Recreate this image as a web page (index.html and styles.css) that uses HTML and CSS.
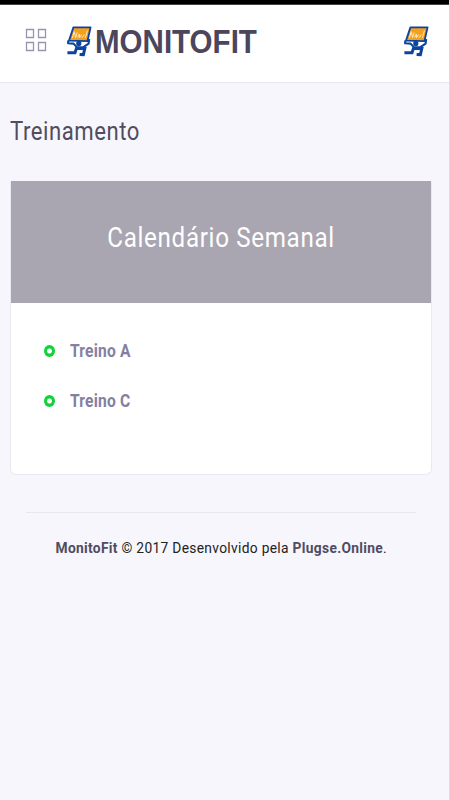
FILE: index.html
```html
<!DOCTYPE html>
<html lang="pt-BR">
<head>
    <meta charset="UTF-8">
    <meta name="viewport" content="width=device-width, initial-scale=1.0">
    <title>MonitoFit - Treinamento</title>
    <link rel="stylesheet" href="styles.css">
</head>
<body>
    <svg width="0" height="0" class="sprite">
        <symbol id="mascot" viewBox="0 0 26 32">
            <path d="M7.4 2.4 L24.6 2.4 L21.4 16.2 L3 15.6 Z" fill="#f5a01d" stroke="#0c459f" stroke-width="1.8" stroke-linejoin="round"/>
            <path d="M6.4 13 L8.2 6.6 L9.6 12.6 L11.2 7.4 M11.6 12.4 L13.4 9 L13.4 12.8 L15.8 9.4 M16 12.8 L18.4 9.6 M21.4 5.6 L19.4 13" fill="none" stroke="#ffe8bd" stroke-width="1"/>
            <circle cx="12.8" cy="18.4" r="2.6" fill="#0c459f"/>
            <path d="M2.4 15.4 L2 18.2 L7.6 18.6 L11 22.4 L17.4 22.2 L22.6 18.6 L23.2 14" fill="none" stroke="#0c459f" stroke-width="2.1" stroke-linejoin="round"/>
            <path d="M10.8 22.4 L9 27.8 L1.4 27.8 M11.4 23.6 L18.8 23.6 L17.4 29.6 L13.6 29.4" fill="none" stroke="#0c459f" stroke-width="3"/>
        </symbol>
    </svg>
    <div class="statusbar"></div>
    <header class="header">
        <svg class="menu" width="22" height="24" viewBox="0 0 22 24">
            <path d="M1.5 1.5h7v8h-7zM13.5 1.5h7v8h-7zM1.5 14.5h7v8h-7zM13.5 14.5h7v8h-7z" fill="none" stroke="#9a94ac" stroke-width="1.3"/>
        </svg>
        <a class="brand">
            <svg class="logo" width="26" height="32"><use href="#mascot"/></svg>
            <span class="brand-name">MONITOFIT</span>
        </a>
        <svg class="logo" width="26" height="32"><use href="#mascot"/></svg>
    </header>
    <main class="content">
        <h1 class="page-title"><span>Treinamento</span></h1>
        <section class="card">
            <div class="card-header">
                <h2>Calendário Semanal</h2>
            </div>
            <ul class="workouts">
                <li><i class="dot"></i><a>Treino A</a></li>
                <li><i class="dot"></i><a>Treino C</a></li>
            </ul>
        </section>
        <footer class="footer">
            <p><b>MonitoFit</b> © 2017 Desenvolvido pela <b>Plugse.Online</b>.</p>
        </footer>
    </main>
</body>
</html>
```

FILE: styles.css
```css
* {
    box-sizing: border-box;
}
body {
    margin: 0;
    height: 800px;
    overflow: hidden;
    font-family: Roboto, sans-serif;
    background-color: #f6f6fc;
    border-right: 1px solid #dcdbe3;
    color: #222;
}
h1, h2, p, ul {
    margin: 0;
    padding: 0;
    font-weight: normal;
}
.sprite {
    display: block;
}
.statusbar {
    width: 450px;
    height: 5px;
    background-color: #000;
    border-bottom: 1px solid #444;
}
.header {
    display: flex;
    align-items: flex-start;
    height: 78px;
    padding: 20px 20px 0 25px;
    background-color: #fff;
    border-bottom: 1px solid #e6e6ee;
}
.menu {
    margin-top: 3px;
}
.brand {
    display: flex;
    margin-left: 19px;
    margin-right: auto;
}
.brand-name {
    width: 162px;
    font: bold 33px/34px "Liberation Sans", Arial, sans-serif;
    color: #4b465c;
    margin-left: 3px;
    transform: scaleX(.895);
    transform-origin: left;
}
.content {
    padding: 0 17px 0 10px;
}
.page-title {
    height: 98px;
    padding-top: 33px;
    font-size: 25px;
    line-height: 32px;
    color: #514c60;
}
.page-title span {
    display: inline-block;
    letter-spacing: .6px;
    transform: scaleX(.885);
    transform-origin: left;
}
.card {
    height: 294px;
    background-color: #fff;
    border: 1px solid #e9e9f1;
    border-top: 0;
    border-radius: 2px 2px 6px 6px;
}
.card-header {
    display: flex;
    justify-content: center;
    height: 122px;
    padding-top: 41px;
    background-color: #a9a6b2;
}
.card-header h2 {
    font-size: 27px;
    line-height: 32px;
    letter-spacing: .75px;
    white-space: nowrap;
    color: #fff;
    transform: scaleX(.895);
}
.workouts {
    list-style: none;
    padding: 36px 33px;
}
.workouts li {
    display: flex;
    align-items: center;
    height: 24px;
    margin-bottom: 25.5px;
}
.workouts a {
    margin-left: 15px;
    font-size: 18.5px;
    font-weight: bold;
    letter-spacing: .2px;
    color: #8580a0;
    transform: scaleX(.845);
    transform-origin: left;
}
.dot {
    width: 11px;
    height: 12px;
    border-radius: 50%;
    background: radial-gradient(circle, #fff 2px, #0fd33a 3px);
}
.footer {
    display: flex;
    justify-content: center;
    margin: 37px 16px 0 16px;
    padding-top: 25px;
    border-top: 1px solid #e6e8ef;
}
.footer p {
    font-size: 15.5px;
    line-height: 20px;
    letter-spacing: .35px;
    white-space: nowrap;
    transform: scaleX(.89);
}
.footer b {
    color: #514c62;
}
```
